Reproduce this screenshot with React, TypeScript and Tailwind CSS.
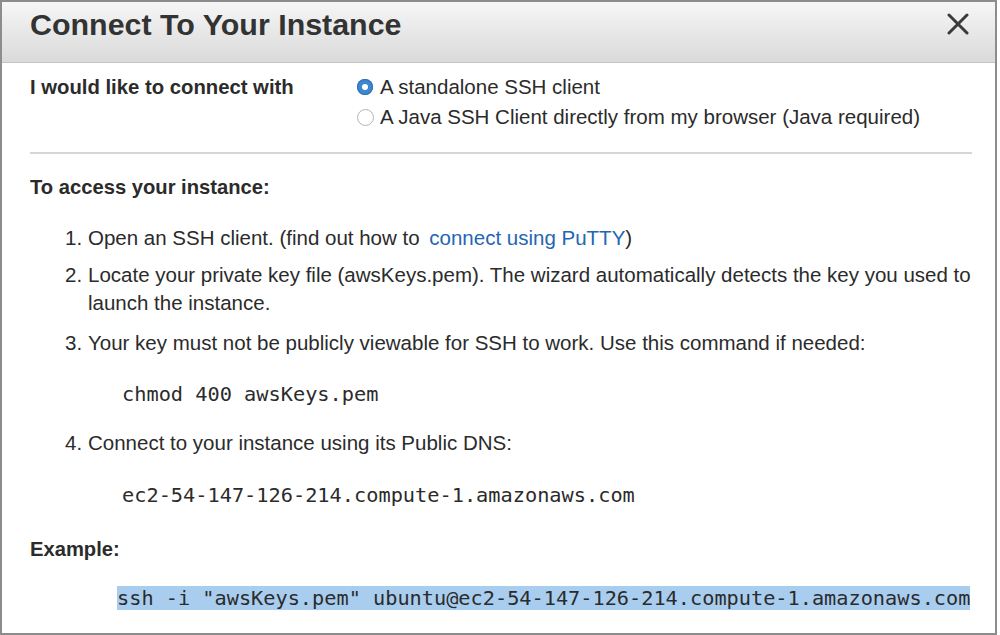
import React from "react";

const sans = { fontFamily: '"Liberation Sans", Arial, Helvetica, sans-serif' };
const mono = { fontFamily: '"DejaVu Sans Mono", Menlo, monospace' };

const Radio = ({ checked }: { checked?: boolean }) =>
  checked ? (
    <span className="flex h-[16px] w-[16px] shrink-0 items-center justify-center rounded-full bg-[#3d86d0] shadow-[inset_0_0_0_1px_#2f6fb5]">
      <span className="h-[6px] w-[6px] rounded-full bg-white" />
    </span>
  ) : (
    <span className="h-[17px] w-[17px] shrink-0 rounded-full border border-[#b4b4b4] bg-white" />
  );

const Step = ({ n, children, className = "" }: { n: string; children: React.ReactNode; className?: string }) => (
  <div className={`flex pl-[35px] ${className}`}>
    <span className="w-[23px] shrink-0">{n}</span>
    <span>{children}</span>
  </div>
);

export default function App() {
  return (
    <div className="h-[635px] w-[1000px] bg-white" style={sans}>
      <div className="flex h-[635px] w-[997px] flex-col border-2 border-[#8c8c8c] text-[#2b2b2b]">
        {/* header */}
        <div className="flex h-[61px] shrink-0 items-start justify-between border-b border-[#c4c4c4] bg-gradient-to-b from-[#f6f6f6] to-[#dadada] pl-[28px] pr-[26px]">
          <h1 className="mt-[3px] text-[30.4px] font-bold leading-[38px] text-[#333]">Connect To Your Instance</h1>
          <svg width="22" height="22" viewBox="0 0 22 22" className="mt-[11px]">
            <path d="M2 2 L20 20 M20 2 L2 20" stroke="#3a3a3a" strokeWidth="3" strokeLinecap="round" />
          </svg>
        </div>

        <div className="flex flex-col pl-[28px] pr-[23px] text-[20.5px] leading-[28px]">
          {/* connect with */}
          <div className="mt-[9px] flex">
            <div className="w-[327px] shrink-0 text-[20.3px] font-bold leading-[30px] text-[#2b2b2b]">
              I would like to connect with
            </div>
            <div className="flex flex-col leading-[30px]">
              <label className="flex items-center gap-[7px]">
                <Radio checked />
                <span>A standalone SSH client</span>
              </label>
              <label className="flex items-center gap-[6px]">
                <Radio />
                <span>A Java SSH Client directly from my browser (Java required)</span>
              </label>
            </div>
          </div>

          <div className="mt-[20px] h-[2px] bg-[#d6d6d6]" />

          <div className="mt-[19px] text-[20.2px] font-bold">To access your instance:</div>

          <Step n="1." className="mt-[23px]">
            Open an SSH client. (find out how to{" "}
            <span className="ml-[4px] text-[#2466b0]">connect using PuTTY</span>)
          </Step>
          <Step n="2." className="mt-[9px]">
            Locate your private key file (awsKeys.pem). The wizard automatically detects the key you used to
            launch the instance.
          </Step>
          <Step n="3." className="mt-[12px]">
            Your key must not be publicly viewable for SSH to work. Use this command if needed:
          </Step>

          <div className="mt-[23px] pl-[92px] text-[20.3px] leading-[28px]" style={mono}>
            chmod 400 awsKeys.pem
          </div>

          <Step n="4." className="mt-[21px]">
            Connect to your instance using its Public DNS:
          </Step>

          <div className="mt-[24px] pl-[92px] text-[20.3px] leading-[28px]" style={mono}>
            ec2-54-147-126-214.compute-1.amazonaws.com
          </div>

          <div className="mt-[26px] text-[20.2px] font-bold">Example:</div>

          <div className="mt-[22px] pl-[87px] text-[20.25px] leading-[27px]" style={mono}>
            <span className="bg-[#a9cdef]">ssh -i "awsKeys.pem" ubuntu@ec2-54-147-126-214.compute-1.amazonaws.com</span>
          </div>
        </div>
      </div>
    </div>
  );
}
